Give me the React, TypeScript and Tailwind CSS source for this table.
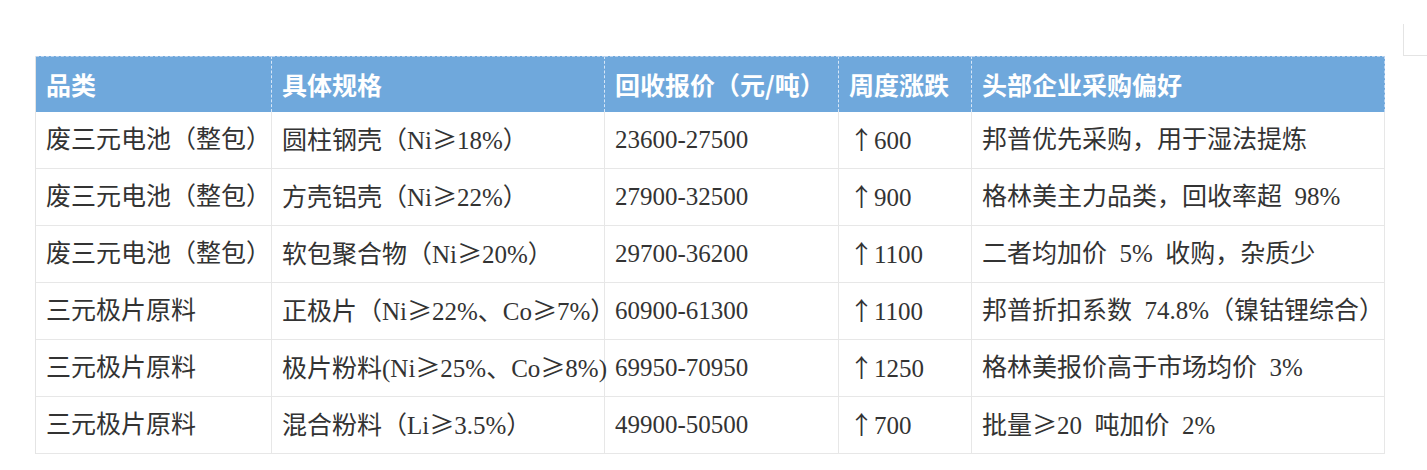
import React from "react";

const headers = ["品类", "具体规格", "回收报价（元/吨）", "周度涨跌", "头部企业采购偏好"];

const rows: string[][] = [
  ["废三元电池（整包）", "圆柱钢壳（Ni≥18%）", "23600-27500", "↑600", "邦普优先采购，用于湿法提炼"],
  ["废三元电池（整包）", "方壳铝壳（Ni≥22%）", "27900-32500", "↑900", "格林美主力品类，回收率超 98%"],
  ["废三元电池（整包）", "软包聚合物（Ni≥20%）", "29700-36200", "↑1100", "二者均加价 5% 收购，杂质少"],
  ["三元极片原料", "正极片（Ni≥22%、Co≥7%）", "60900-61300", "↑1100", "邦普折扣系数 74.8%（镍钴锂综合）"],
  ["三元极片原料", "极片粉料(Ni≥25%、Co≥8%)", "69950-70950", "↑1250", "格林美报价高于市场均价 3%"],
  ["三元极片原料", "混合粉料（Li≥3.5%）", "49900-50500", "↑700", "批量≥20 吨加价 2%"],
];

function Rich({ text }: { text: string }) {
  const parts: React.ReactNode[] = [];
  let buf = "";
  let k = 0;
  const flush = () => {
    if (buf) {
      parts.push(<span key={k++}>{buf}</span>);
      buf = "";
    }
  };
  for (const ch of text) {
    if (ch === "≥" || ch === "↑") {
      flush();
      parts.push(
        <span
          key={k++}
          className="inline-block w-[1em] text-center font-['Noto_Sans_CJK_SC',sans-serif]"
        >
          {ch}
        </span>
      );
    } else if (ch === " ") {
      flush();
      parts.push(<span key={k++} className="inline-block w-[0.5em]">{" "}</span>);
    } else {
      buf += ch;
    }
  }
  flush();
  return <span className="whitespace-nowrap">{parts}</span>;
}

export default function App() {
  return (
    <div className="flex items-start bg-white w-[1427px] h-[470px] pl-[35px]">
      <div className="mt-[56px] flex-none border-l border-[#e4e4e4]">
        <div className="grid grid-cols-[236px_333px_234px_133px_413px]">
          {headers.map((h, i) => (
            <div
              key={i}
              className={
                "h-[56px] flex items-center px-[10px] bg-[#6fa8dc] border-t border-dashed border-t-[#b9d3f0] text-white font-bold text-[25px] whitespace-nowrap font-['Noto_Sans_CJK_SC','Noto_Sans',sans-serif] " +
                (i === headers.length - 1
                  ? "border-r border-r-[#b9d3f0]"
                  : "border-r border-r-[#d6e6f7]")
              }
            >
              {h}
            </div>
          ))}
          {rows.map((r, ri) =>
            r.map((c, ci) => (
              <div
                key={ri + "-" + ci}
                className="h-[57px] flex items-center px-[10px] border-r border-b border-[#e7e7e7] text-[#333333] text-[25px] whitespace-nowrap font-['Liberation_Serif','Noto_Sans_CJK_SC',serif]"
              >
                <Rich text={c} />
              </div>
            ))
          )}
        </div>
      </div>
      <div className="flex-none ml-[18px] mt-[24px] w-[24px] h-[32px] border-l border-b border-[#e4e4e4]" />
    </div>
  );
}
